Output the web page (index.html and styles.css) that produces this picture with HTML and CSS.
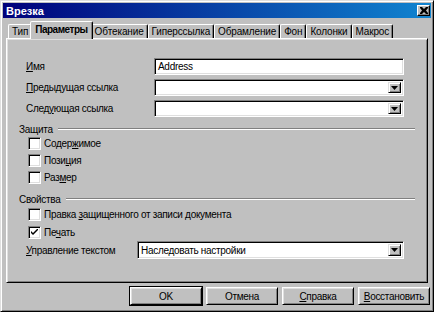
FILE: index.html
```html
<!DOCTYPE html>
<html lang="ru">

<head>
    <meta charset="UTF-8" />
    <meta name="viewport" content="width=device-width, initial-scale=1.0" />
    <title>Врезка</title>
    <link rel="stylesheet" href="styles.css">
</head>

<body>
    <div class="window">
        <div class="titlebar">
            <span class="title">Врезка</span>
            <span class="close-btn">
                <svg width="8" height="7" viewBox="0 0 8 7">
                    <path d="M0 0h2l2 2 2-2h2v1L6 3.5 8 6v1H6L4 5 2 7H0V6l2-2.5L0 1z" fill="#000" />
                </svg>
            </span>
        </div>

        <div class="tabs">
            <div class="tab">Тип</div>
            <div class="tab active">Параметры</div>
            <div class="tab">Обтекание</div>
            <div class="tab">Гиперссылка</div>
            <div class="tab">Обрамление</div>
            <div class="tab">Фон</div>
            <div class="tab">Колонки</div>
            <div class="tab">Макрос</div>
        </div>

        <div class="panel">
            <div class="field-row first">
                <label class="field-label"><u>И</u>мя</label>
                <div class="textbox">Address</div>
            </div>
            <div class="field-row">
                <label class="field-label"><u>П</u>редыдущая ссылка</label>
                <div class="combo">
                    <span class="combo-value"></span>
                    <span class="combo-btn"><svg width="7" height="4" viewBox="0 0 7 4"><path d="M0 0h7L3.5 4z" fill="#000" /></svg></span>
                </div>
            </div>
            <div class="field-row">
                <label class="field-label">След<u>у</u>ющая ссылка</label>
                <div class="combo">
                    <span class="combo-value"></span>
                    <span class="combo-btn"><svg width="7" height="4" viewBox="0 0 7 4"><path d="M0 0h7L3.5 4z" fill="#000" /></svg></span>
                </div>
            </div>

            <div class="group-title">Защита</div>
            <div class="check-row"><span class="checkbox"></span><span>Содер<u>ж</u>имое</span></div>
            <div class="check-row"><span class="checkbox"></span><span>Пози<u>ц</u>ия</span></div>
            <div class="check-row"><span class="checkbox"></span><span>Раз<u>м</u>ер</span></div>

            <div class="group-title second">Свойства</div>
            <div class="check-row tall"><span class="checkbox"></span><span>Правка <u>з</u>ащищенного от записи документа</span></div>
            <div class="check-row tall">
                <span class="checkbox">
                    <svg width="7" height="7" viewBox="0 0 7 7"><path d="M0 2l2 2 5-5v2L2 6 0 4z" fill="#000" /></svg>
                </span>
                <span>Пе<u>ч</u>ать</span>
            </div>
            <div class="field-row text-flow">
                <label class="field-label short"><u>У</u>правление текстом</label>
                <div class="combo wide">
                    <span class="combo-value">Наследовать настройки</span>
                    <span class="combo-btn"><svg width="7" height="4" viewBox="0 0 7 4"><path d="M0 0h7L3.5 4z" fill="#000" /></svg></span>
                </div>
            </div>
        </div>

        <div class="buttons">
            <button class="btn default">OK</button>
            <button class="btn">Отмена</button>
            <button class="btn"><u>С</u>правка</button>
            <button class="btn"><u>В</u>осстановить</button>
        </div>
    </div>
</body>

</html>
```

FILE: styles.css
```css
body {
    margin: 0;
    background: #c0c0c0;
    font-family: "Liberation Sans", Arial, sans-serif;
    font-size: 10px;
    letter-spacing: -0.3px;
    color: #000;
}

u {
    text-decoration: underline;
    text-underline-offset: 1px;
}

.window {
    width: 434px;
    height: 312px;
    box-sizing: border-box;
    padding: 2px;
    background: #c0c0c0;
    border: 1px solid;
    border-color: #dfdfdf #000 #000 #dfdfdf;
    box-shadow: inset 1px 1px #fff, inset -1px -1px #808080;
}

.titlebar {
    height: 15px;
    display: flex;
    align-items: center;
    justify-content: space-between;
    background: linear-gradient(90deg, #00007b, #1084d0);
    color: #fff;
    padding: 0 1px 0 3px;
}

.title {
    font-weight: bold;
    font-size: 11px;
    letter-spacing: 0;
}

.close-btn {
    width: 11px;
    height: 9px;
    display: flex;
    align-items: center;
    justify-content: center;
    background: #c0c0c0;
    border: 1px solid;
    border-color: #fff #000 #000 #fff;
    box-shadow: inset -1px -1px #808080;
}

/* tabs */
.tabs {
    height: 20px;
    display: flex;
    align-items: flex-end;
    padding-left: 5px;
}

.tab {
    height: 13px;
    line-height: 13px;
    padding: 0 3px;
    letter-spacing: -0.15px;
    border: 1px solid;
    border-bottom: none;
    border-color: #fff #000 transparent #fff;
    border-radius: 2px 2px 0 0;
    box-shadow: inset -1px 0 #808080;
}

.tab.active {
    position: relative;
    z-index: 1;
    height: 17px;
    line-height: 15px;
    margin: 0 -2px -1px;
    padding: 0 4px;
    font-weight: bold;
    letter-spacing: -0.5px;
    background: #c0c0c0;
}

/* tab page */
.panel {
    height: 245px;
    box-sizing: border-box;
    margin: 0 3px;
    padding: 19px 10px 0 19px;
    border: 1px solid;
    border-color: #fff #000 #000 #fff;
    box-shadow: inset 1px 1px #dfdfdf, inset -1px -1px #808080;
}

.field-row {
    display: flex;
    align-items: center;
    height: 17px;
    margin-bottom: 4px;
}

.field-label {
    width: 128px;
    flex-shrink: 0;
}

.field-label.short {
    width: 111px;
}

.textbox,
.combo {
    width: 250px;
    height: 17px;
    box-sizing: border-box;
    background: #fff;
    border: 1px solid;
    border-color: #808080 #fff #fff #808080;
    box-shadow: inset 1px 1px #000, inset -1px -1px #dfdfdf;
}

.textbox {
    padding: 1px 3px;
    line-height: 13px;
}

.combo {
    display: flex;
    align-items: stretch;
    padding: 2px;
}

.combo.wide {
    width: 267px;
    height: 18px;
}

.text-flow {
    height: 18px;
    margin-top: 0;
}

.combo-value {
    flex: 1;
    padding-left: 1px;
    line-height: 13px;
}

.combo-btn {
    width: 11px;
    display: flex;
    align-items: center;
    justify-content: center;
    background: #c0c0c0;
    border: 1px solid;
    border-color: #dfdfdf #000 #000 #dfdfdf;
    box-shadow: inset 1px 1px #fff, inset -1px -1px #808080;
}

.group-title {
    display: flex;
    align-items: center;
    height: 12px;
    margin: 6px 0 0 -7px;
}

.group-title::after {
    content: "";
    flex: 1;
    margin-left: 5px;
    margin-right: 2px;
    border-top: 1px solid #808080;
    border-bottom: 1px solid #fff;
}

.group-title.second {
    margin-top: 7px;
}

.check-row {
    display: flex;
    align-items: center;
    height: 17px;
    padding-left: 2px;
}

.check-row.tall {
    height: 18px;
}

.checkbox {
    width: 11px;
    height: 11px;
    margin-right: 3px;
    display: flex;
    align-items: center;
    justify-content: center;
    background: #fff;
    border: 1px solid;
    border-color: #808080 #fff #fff #808080;
    box-shadow: inset 1px 1px #000, inset -1px -1px #dfdfdf;
}

/* bottom buttons */
.buttons {
    display: flex;
    justify-content: flex-end;
    gap: 4px;
    margin-top: 4px;
    padding-right: 1px;
}

.btn {
    width: 72px;
    height: 18px;
    padding: 0;
    font-family: inherit;
    font-size: 10px;
    letter-spacing: -0.3px;
    color: #000;
    background: #c0c0c0;
    border: 1px solid;
    border-color: #fff #000 #000 #fff;
    box-shadow: inset 1px 1px #dfdfdf, inset -1px -1px #808080;
}

.btn.default {
    outline: 1px solid #000;
}
```
